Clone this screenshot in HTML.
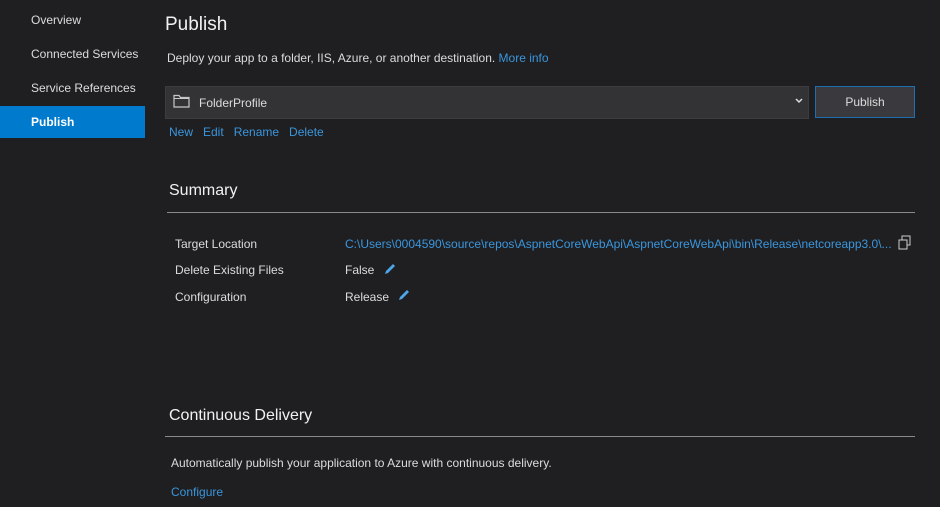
<!DOCTYPE html><html><head><style>
body{margin:0;width:940px;height:507px;background:#1f1f21;font-family:"Liberation Sans",sans-serif;color:#dcdcdc;position:relative;overflow:hidden;font-size:12px}
.a{position:absolute;white-space:nowrap}
.l{color:#3a96dd}
</style></head><body>
<div class="a" style="left:31px;top:13px">Overview</div>
<div class="a" style="left:31px;top:47px">Connected Services</div>
<div class="a" style="left:31px;top:81px">Service References</div>
<div class="a" style="left:0;top:106px;width:145px;height:32px;background:#007acc"></div>
<div class="a" style="left:31px;top:115px;color:#fff;font-weight:bold">Publish</div>
<div class="a" style="left:165px;top:14px;font-size:19px;color:#f1f1f1">Publish</div>
<div class="a" style="left:167px;top:51px">Deploy your app to a folder, IIS, Azure, or another destination. <span class="l">More info</span></div>
<div class="a" style="left:165px;top:86px;width:642px;height:31px;background:#333336;border:1px solid #3c3c40"></div>
<svg class="a" style="left:173px;top:94px" width="17" height="14"><path d="M1 1.5h5l1.5 2H16v9.5H1z" fill="none" stroke="#c8c8c8" stroke-width="1.2"/><path d="M1 4.5h15" stroke="#c8c8c8"/></svg>
<div class="a" style="left:199px;top:96px">FolderProfile</div>
<svg class="a" style="left:795px;top:98px" width="8" height="6"><path d="M1 1l3 3 3-3" fill="none" stroke="#ddd" stroke-width="1.5"/></svg>
<div class="a" style="left:815px;top:86px;width:98px;height:30px;background:#3a3a3e;border:1px solid #1c6fb0;text-align:center;line-height:30px">Publish</div>
<div class="a l" style="left:169px;top:125px">New&nbsp;&nbsp; Edit&nbsp;&nbsp; Rename&nbsp;&nbsp; Delete</div>
<div class="a" style="left:169px;top:182px;font-size:16px;color:#f1f1f1">Summary</div>
<div class="a" style="left:167px;top:212px;width:748px;height:1px;background:#8a8a8a"></div>
<div class="a" style="left:175px;top:237px">Target Location</div>
<div class="a l" style="left:345px;top:237px">C:\Users\0004590\source\repos\AspnetCoreWebApi\AspnetCoreWebApi\bin\Release\netcoreapp3.0\...</div>
<svg class="a" style="left:898px;top:235px" width="14" height="15"><rect x="1" y="5" width="8" height="9" fill="none" stroke="#ccc"/><path d="M4 5V1h8v9H9" fill="none" stroke="#ccc"/></svg>
<div class="a" style="left:175px;top:263px">Delete Existing Files</div>
<div class="a" style="left:345px;top:263px">False</div>
<svg class="a" style="left:383px;top:263px" width="14" height="13"><path d="M2 11l1-3 7-7 2 2-7 7z" fill="#4ea6ea"/></svg>
<div class="a" style="left:175px;top:290px">Configuration</div>
<div class="a" style="left:345px;top:290px">Release</div>
<svg class="a" style="left:397px;top:289px" width="14" height="13"><path d="M2 11l1-3 7-7 2 2-7 7z" fill="#4ea6ea"/></svg>
<div class="a" style="left:169px;top:407px;font-size:16px;color:#f1f1f1">Continuous Delivery</div>
<div class="a" style="left:165px;top:436px;width:750px;height:1px;background:#8a8a8a"></div>
<div class="a" style="left:171px;top:456px">Automatically publish your application to Azure with continuous delivery.</div>
<div class="a l" style="left:171px;top:485px">Configure</div>
</body></html>
